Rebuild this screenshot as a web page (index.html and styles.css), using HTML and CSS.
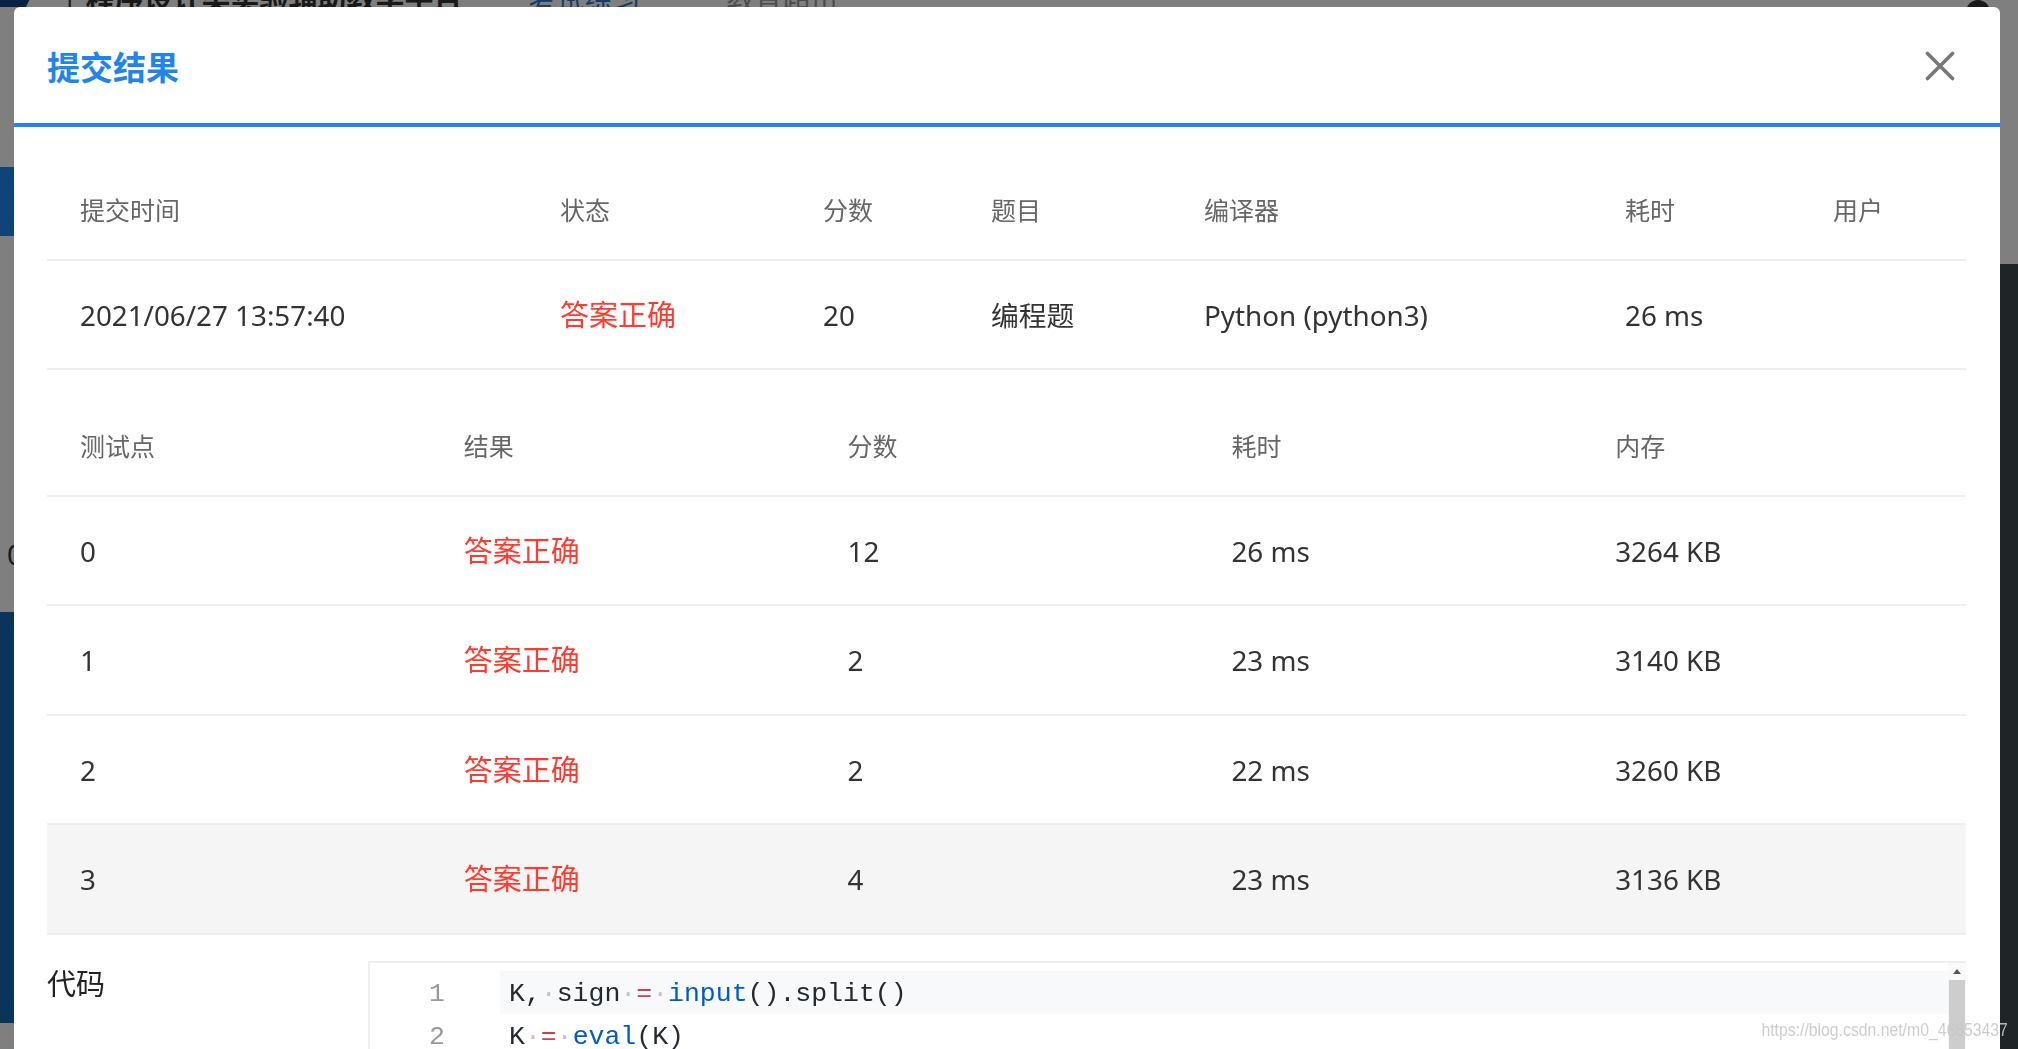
FILE: index.html
```html
<!DOCTYPE html>
<html lang="zh-CN">
<head>
<meta charset="utf-8">
<title>提交结果</title>
<link rel="stylesheet" href="styles.css">
</head>
<body>
<div class="page">
  <header class="site-header">
    <span class="logo"></span>
    <span class="sep">|</span>
    <span class="site-title">程序设计类实验辅助教学平台</span>
    <span class="nav nav-active">考试练习</span>
    <span class="nav">教育超市</span>
    <span class="avatar"></span>
  </header>
  <div class="page-main">
    <div class="side-left">
      <div class="blk white b1"></div>
      <div class="blk blue b2"></div>
      <div class="blk white b3"><span class="peek">0</span></div>
      <div class="blk navy b4"></div>
      <div class="blk white b5"></div>
    </div>
    <div class="side-right">
      <div class="blk white r1"></div>
      <div class="blk dark r2"></div>
    </div>
  </div>
</div>

<div class="mask"></div>

<div class="modal">
  <div class="modal-header">
    <h2 class="modal-title">提交结果</h2>
    <button class="close" aria-label="关闭">
      <svg width="30" height="30" viewBox="0 0 30 30"><path d="M2.5 2.5 L27.5 27.5 M27.5 2.5 L2.5 27.5" stroke="#777" stroke-width="3.6" stroke-linecap="round" fill="none"/></svg>
    </button>
  </div>
  <div class="modal-body">
    <table class="grid t1">
      <colgroup>
        <col class="c480"><col class="c263"><col class="c168"><col class="c213"><col class="c421"><col class="c208"><col class="c166">
      </colgroup>
      <thead>
        <tr><th>提交时间</th><th>状态</th><th>分数</th><th>题目</th><th>编译器</th><th>耗时</th><th>用户</th></tr>
      </thead>
      <tbody>
        <tr><td>2021/06/27 13:57:40</td><td class="ok">答案正确</td><td>20</td><td>编程题</td><td>Python (python3)</td><td>26 ms</td><td></td></tr>
      </tbody>
    </table>

    <table class="grid t2">
      <thead>
        <tr><th>测试点</th><th>结果</th><th>分数</th><th>耗时</th><th>内存</th></tr>
      </thead>
      <tbody>
        <tr><td>0</td><td class="ok">答案正确</td><td>12</td><td>26 ms</td><td>3264 KB</td></tr>
        <tr><td>1</td><td class="ok">答案正确</td><td>2</td><td>23 ms</td><td>3140 KB</td></tr>
        <tr><td>2</td><td class="ok">答案正确</td><td>2</td><td>22 ms</td><td>3260 KB</td></tr>
        <tr class="hover"><td>3</td><td class="ok">答案正确</td><td>4</td><td>23 ms</td><td>3136 KB</td></tr>
      </tbody>
    </table>

    <div class="code-row">
      <div class="code-label">代码</div>
      <div class="editor">
        <div class="lines">
          <div class="line active"><span class="ln">1</span><span class="src">K,<span class="ws">·</span>sign<span class="ws">·</span><span class="op">=</span><span class="ws">·</span><span class="fn">input</span>().split()</span></div>
          <div class="line"><span class="ln">2</span><span class="src">K<span class="ws">·</span><span class="op">=</span><span class="ws">·</span><span class="fn">eval</span>(K)</span></div>
        </div>
        <div class="vscroll">
          <div class="arrow"></div>
          <div class="thumb"></div>
        </div>
      </div>
    </div>
  </div>
</div>

<div class="watermark">https://blog.csdn.net/m0_46653437</div>
</body>
</html>
```

FILE: styles.css
```css
* { box-sizing: border-box; }

html, body {
  margin: 0;
  padding: 0;
  height: 100%;
  overflow: hidden;
  background: #fff;
  font-family: "Noto Sans", "Noto Sans CJK SC", sans-serif;
}

/* ---------- background page (behind mask) ---------- */
.page {
  height: 100vh;
  display: flex;
  flex-direction: column;
}

.site-header {
  height: 7px;
  flex: none;
  display: flex;
  align-items: flex-end;
  overflow: hidden;
  background: #fff;
}

.site-header .logo {
  width: 34px;
  height: 20px;
  margin-bottom: -4px;
  background: #16418a;
  clip-path: polygon(0 0, 100% 0, 70% 100%, 0 100%);
}

.site-header .sep {
  margin-left: 28px;
  font-size: 28px;
  line-height: 28px;
  color: #333;
  margin-bottom: -6px;
}

.site-header .site-title {
  margin-left: 8px;
  font-family: "Noto Sans CJK SC", sans-serif;
  font-weight: 700;
  font-size: 29px;
  line-height: 29px;
  color: #333;
  margin-bottom: -5px;
}

.site-header .nav {
  font-family: "Noto Sans CJK SC", sans-serif;
  font-size: 28px;
  line-height: 28px;
  color: #999;
  margin-bottom: -6px;
  margin-left: 86px;
}

.site-header .nav-active {
  color: #2a78d8;
  margin-left: 66px;
}

.site-header .avatar {
  margin-left: auto;
  margin-right: 28px;
  width: 24px;
  height: 24px;
  border-radius: 50%;
  background: #333;
  margin-bottom: -17px;
}

.page-main {
  flex: 1;
  display: flex;
  justify-content: space-between;
}

.side-left, .side-right {
  display: flex;
  flex-direction: column;
}

.side-left { width: 14px; }
.side-right { width: 18px; }

.blk { flex: none; }
.white { background: #fff; }
.blue { background: #1e88f2; }
.navy { background: #1668b8; }
.dark { background: #3a4a4e; flex: 1; }

.b1 { height: 160px; }
.b2 { height: 69px; }
.b3 {
  height: 376px;
  display: flex;
  align-items: flex-end;
  justify-content: flex-end;
  overflow: hidden;
}
.b3 .peek {
  font-size: 28px;
  line-height: 40px;
  color: #333;
  margin-right: -9px;
  margin-bottom: 38px;
}
.b4 { height: 411px; }
.b5 { flex: 1; }
.r1 { height: 257px; }

.mask {
  position: fixed;
  inset: 0;
  background: rgba(0, 0, 0, 0.5);
}

/* ---------- modal ---------- */
.modal {
  position: fixed;
  left: 14px;
  top: 7px;
  width: 1986px;
  height: 1100px;
  background: #fff;
  border-radius: 6px 6px 0 0;
  display: flex;
  flex-direction: column;
}

.modal-header {
  height: 120px;
  flex: none;
  display: flex;
  align-items: center;
  justify-content: space-between;
  padding: 1px 45px 0 33px;
  border-bottom: 4px solid #1f86f0;
}

.modal-title {
  margin: 0;
  font-family: "Noto Sans CJK SC", sans-serif;
  font-size: 33px;
  line-height: 44px;
  font-weight: 700;
  color: #1f84ec;
}

.close {
  border: 0;
  background: none;
  padding: 0;
  width: 30px;
  height: 30px;
  display: flex;
}

.modal-body {
  padding: 23px 34px 0 33px;
}

/* ---------- tables ---------- */
.grid {
  width: 100%;
  border-collapse: collapse;
  table-layout: fixed;
}

.grid th, .grid td {
  height: 109.5px;
  padding: 0 33px;
  text-align: left;
  vertical-align: middle;
  border-bottom: 2px solid #eeeeee;
  white-space: nowrap;
}

.grid th {
  font-weight: 400;
  font-size: 25px;
  line-height: 36px;
  color: #666;
  padding-top: 12px;
}

.grid td {
  font-size: 27.8px;
  line-height: 40px;
  color: #333;
  padding-top: 1px;
}

.grid td.ok {
  color: #ff3b30;
  font-size: 29px;
}

.t2 { margin-top: 16px; }

.grid tr.hover td { background: #f5f5f5; }

.c480 { width: 480px; }
.c263 { width: 263px; }
.c168 { width: 168px; }
.c213 { width: 213px; }
.c421 { width: 421px; }
.c208 { width: 208px; }
.c166 { width: 166px; }

/* ---------- code ---------- */
.code-row {
  margin-top: 26px;
  display: flex;
  align-items: flex-start;
}

.code-label {
  width: 321px;
  flex: none;
  font-family: "Noto Sans CJK SC", sans-serif;
  font-size: 29px;
  line-height: 42px;
  color: #222;
}

.editor {
  flex: 1;
  height: 200px;
  display: flex;
  border-top: 2px solid #eeeeee;
  border-left: 2px solid #eeeeee;
}

.lines {
  flex: 1;
  padding-top: 8px;
}

.line {
  display: flex;
  height: 43px;
  font-family: "Liberation Mono", "DejaVu Sans Mono", monospace;
  font-size: 26.5px;
  line-height: 47px;
  color: #24292e;
}

.ln {
  width: 130px;
  flex: none;
  text-align: right;
  padding-right: 55px;
  color: #999;
}

.src {
  flex: 1;
  padding-left: 9px;
  white-space: pre;
  overflow: hidden;
}

.line.active .src { background: #f7f9fb; }

.ws { color: #c4c4c4; }
.op { color: #d73a49; }
.fn { color: #005cc5; }

.vscroll {
  width: 18px;
  flex: none;
  background: #f5f5f5;
  display: flex;
  flex-direction: column;
}

.vscroll .arrow {
  height: 17px;
  flex: none;
  background: #fafafa;
  display: flex;
  justify-content: center;
  align-items: center;
}

.vscroll .arrow::before {
  content: "";
  width: 0;
  height: 0;
  border-left: 4px solid transparent;
  border-right: 4px solid transparent;
  border-bottom: 5px solid #555;
}

.vscroll .thumb {
  flex: 1;
  margin: 0 1px;
  background: #cdcdcd;
}

/* ---------- watermark ---------- */
.watermark {
  position: fixed;
  right: 10px;
  bottom: 8px;
  font-family: "Liberation Sans", sans-serif;
  font-size: 19px;
  line-height: 22px;
  color: rgba(200, 200, 200, 0.9);
  transform: scaleX(0.83);
  transform-origin: right center;
  white-space: nowrap;
}
```
